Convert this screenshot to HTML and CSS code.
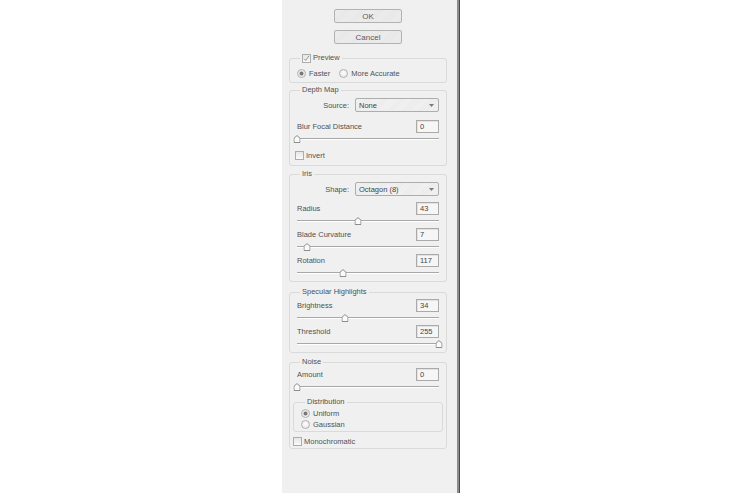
FILE: index.html
```html
<!DOCTYPE html>
<html>
<head>
<meta charset="utf-8">
<link rel="stylesheet" href="styles.css">
</head>
<body>
<div class="panel">
  <div class="buttons">
    <div class="btn">OK</div>
    <div class="btn">Cancel</div>
  </div>

  <div class="group g-preview">
    <div class="legend"><span class="check"><svg viewBox="0 0 9 9" width="7" height="7"><path d="M1.5 4.8 L3.4 7 L7.6 1.2" fill="none" stroke="#7a7a7a" stroke-width="1"/></svg></span>Preview</div>
    <div class="options">
      <div class="opt"><span class="radio on"></span>Faster</div>
      <div class="opt"><span class="radio"></span>More Accurate</div>
    </div>
  </div>

  <div class="group g-depth">
    <div class="legend">Depth Map</div>
    <div class="field mt3"><span>Source:</span><div class="select">None<svg class="arrow" viewBox="0 0 5 3" width="5" height="3"><path d="M0 0 H5 L2.5 3 Z" fill="#7a7a7a"/></svg></div></div>
    <div class="row mt8"><span>Blur Focal Distance</span><span class="num">0</span></div>
    <div class="slider"><span class="thumb" style="left:0%"><svg viewBox="0 0 7 8" width="7" height="8"><path d="M0.5 3.2 L3.5 0.6 L6.5 3.2 V7.5 H0.5 Z" fill="#fbfbfb" stroke="#8d8d8d" stroke-width="1"/></svg></span></div>
    <div class="opt chk-invert"><span class="check"></span>Invert</div>
  </div>

  <div class="group g-iris">
    <div class="legend">Iris</div>
    <div class="field mt3"><span>Shape:</span><div class="select">Octagon (8)<svg class="arrow" viewBox="0 0 5 3" width="5" height="3"><path d="M0 0 H5 L2.5 3 Z" fill="#7a7a7a"/></svg></div></div>
    <div class="row mt6"><span>Radius</span><span class="num">43</span></div>
    <div class="slider"><span class="thumb" style="left:43%"><svg viewBox="0 0 7 8" width="7" height="8"><path d="M0.5 3.2 L3.5 0.6 L6.5 3.2 V7.5 H0.5 Z" fill="#fbfbfb" stroke="#8d8d8d" stroke-width="1"/></svg></span></div>
    <div class="row mt3"><span>Blade Curvature</span><span class="num">7</span></div>
    <div class="slider"><span class="thumb" style="left:7%"><svg viewBox="0 0 7 8" width="7" height="8"><path d="M0.5 3.2 L3.5 0.6 L6.5 3.2 V7.5 H0.5 Z" fill="#fbfbfb" stroke="#8d8d8d" stroke-width="1"/></svg></span></div>
    <div class="row mt3"><span>Rotation</span><span class="num">117</span></div>
    <div class="slider"><span class="thumb" style="left:32.5%"><svg viewBox="0 0 7 8" width="7" height="8"><path d="M0.5 3.2 L3.5 0.6 L6.5 3.2 V7.5 H0.5 Z" fill="#fbfbfb" stroke="#8d8d8d" stroke-width="1"/></svg></span></div>
  </div>

  <div class="group g-spec">
    <div class="legend">Specular Highlights</div>
    <div class="row mt2"><span>Brightness</span><span class="num">34</span></div>
    <div class="slider"><span class="thumb" style="left:34%"><svg viewBox="0 0 7 8" width="7" height="8"><path d="M0.5 3.2 L3.5 0.6 L6.5 3.2 V7.5 H0.5 Z" fill="#fbfbfb" stroke="#8d8d8d" stroke-width="1"/></svg></span></div>
    <div class="row mt3"><span>Threshold</span><span class="num">255</span></div>
    <div class="slider"><span class="thumb" style="left:100%"><svg viewBox="0 0 7 8" width="7" height="8"><path d="M0.5 3.2 L3.5 0.6 L6.5 3.2 V7.5 H0.5 Z" fill="#fbfbfb" stroke="#8d8d8d" stroke-width="1"/></svg></span></div>
  </div>

  <div class="group g-noise">
    <div class="legend">Noise</div>
    <div class="row mt1"><span>Amount</span><span class="num">0</span></div>
    <div class="slider"><span class="thumb" style="left:0%"><svg viewBox="0 0 7 8" width="7" height="8"><path d="M0.5 3.2 L3.5 0.6 L6.5 3.2 V7.5 H0.5 Z" fill="#fbfbfb" stroke="#8d8d8d" stroke-width="1"/></svg></span></div>
    <div class="group g-dist">
      <div class="legend">Distribution</div>
      <div class="opt dist-opt"><span class="radio on"></span>Uniform</div>
      <div class="opt dist-opt"><span class="radio"></span>Gaussian</div>
    </div>
    <div class="opt chk-mono"><span class="check"></span>Monochromatic</div>
  </div>
</div>
</body>
</html>
```

FILE: styles.css
```css
* { box-sizing: border-box; }

body {
  margin: 0;
  background: #ffffff;
  font-family: "Liberation Sans", Arial, sans-serif;
  font-size: 7.5px;
  color: #505050;
}

.panel {
  margin-left: 282px;
  width: 177px;
  height: 493px;
  background: #f0f0f0;
  border-right: 2px solid #8c8c8c;
  box-shadow: 1px 0 0 #4a4a4a;
  padding: 9px 10px 0 7px;
}

.buttons {
  display: flex;
  flex-direction: column;
  align-items: center;
  gap: 7px;
}

.btn {
  width: 68px;
  height: 14px;
  border: 1px solid #b2b2b2;
  border-radius: 2px;
  background: repeating-linear-gradient(135deg, #ededed 0 1px, #e7e7e7 1px 2px);
  display: flex;
  align-items: center;
  justify-content: center;
  color: #5a5a5a;
  font-size: 8px;
}

.group {
  border: 1px solid #dadada;
  border-radius: 3px;
  padding: 0 7px;
}

.legend {
  display: flex;
  align-items: center;
  width: fit-content;
  height: 10px;
  margin: -6px 0 0 3px;
  padding: 0 2px;
  background: #f0f0f0;
  line-height: 10px;
}

.g-preview { margin-top: 14px; padding-bottom: 4px; }
.g-depth { margin-top: 7px; padding-bottom: 5px; }
.g-iris { margin-top: 8px; padding-bottom: 4px; }
.g-spec { margin-top: 10px; padding-bottom: 4px; }
.g-noise { margin-top: 9px; padding-bottom: 2px; }

.g-dist {
  margin: 11px -4px 0 -4px;
  padding-bottom: 2px;
}
.g-dist .legend { margin-left: 4px; }

.mt1 { margin-top: 1px; }
.mt2 { margin-top: 2px; }
.mt3 { margin-top: 3px; }
.mt6 { margin-top: 6px; }
.mt8 { margin-top: 8px; }

.options {
  display: flex;
  gap: 9px;
  margin-top: 5px;
  height: 10px;
  align-items: center;
}

.opt {
  display: flex;
  align-items: center;
  height: 10px;
}

.dist-opt { margin-top: 1px; }

.chk-invert { margin: 8px 0 0 -2px; height: 9px; }
.chk-mono { margin: 5px 0 0 -4px; height: 9px; }

.check {
  width: 9px;
  height: 9px;
  border: 1px solid #acacac;
  background: linear-gradient(#e6e6e6, #fafafa);
  display: inline-flex;
  align-items: center;
  justify-content: center;
  margin-right: 2px;
  flex: none;
}

.radio {
  width: 9px;
  height: 9px;
  border-radius: 50%;
  border: 1px solid #b0b0b0;
  background: radial-gradient(circle at 50% 40%, #fdfdfd, #e4e4e4);
  margin-right: 3px;
  flex: none;
}

.radio.on {
  background: radial-gradient(circle, #777 0 1.6px, #dadada 2.2px, #f4f4f4 3.5px);
}

.field {
  display: flex;
  justify-content: flex-end;
  align-items: center;
  gap: 6px;
  height: 14px;
}

.select {
  width: 84px;
  height: 14px;
  border: 1px solid #adadad;
  border-radius: 2px;
  background: repeating-linear-gradient(135deg, #f2f2f2 0 1px, #ebebeb 1px 2px);
  display: flex;
  align-items: center;
  padding-left: 3px;
  color: #444;
}

.arrow {
  margin-left: auto;
  margin-right: 4px;
}

.row {
  display: flex;
  justify-content: space-between;
  align-items: center;
  height: 13px;
}

.num {
  width: 23px;
  height: 13px;
  border: 1px solid #aaaaaa;
  background: #f6f6f6;
  box-shadow: inset 1px 1px 0 #e2e2e2;
  padding-left: 3px;
  display: flex;
  align-items: center;
  color: #444;
}

.slider {
  position: relative;
  height: 10px;
}

.slider::before {
  content: "";
  position: absolute;
  left: 0;
  right: 0;
  top: 5px;
  height: 1px;
  background: #a8a8a8;
  box-shadow: 0 1px 0 #ffffff;
}

.thumb {
  position: absolute;
  top: 2px;
  width: 7px;
  height: 8px;
  transform: translateX(-50%);
  display: block;
}

.thumb svg { display: block; }
```
